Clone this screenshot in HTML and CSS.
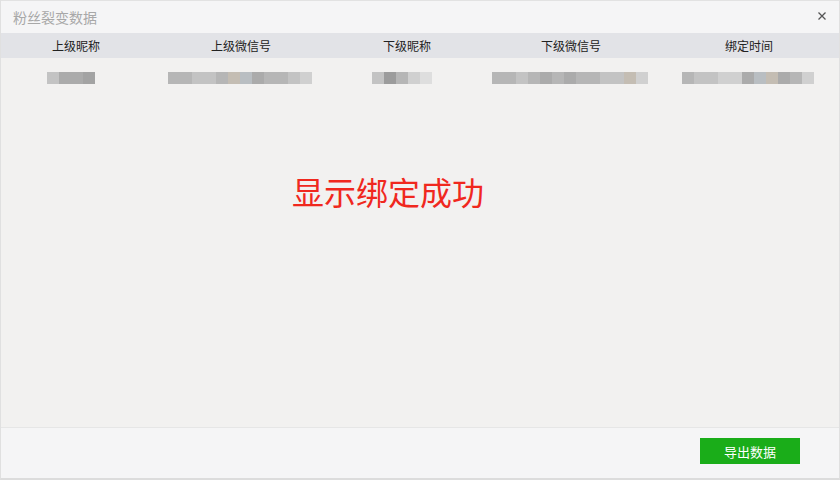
FILE: index.html
```html
<!DOCTYPE html>
<html lang="zh-CN">
<head>
  <meta charset="UTF-8">
  <title>粉丝裂变数据</title>
  <link rel="stylesheet" href="styles.css">
</head>
<body>

  <div class="window">
    <div class="title-bar">
      <span class="title">粉丝裂变数据</span>
      <svg class="close" width="8" height="8" viewBox="0 0 8 8">
        <path d="M0.5 0.5 L7.5 7.5 M7.5 0.5 L0.5 7.5" stroke="#555" stroke-width="1.3" fill="none"/>
      </svg>
    </div>

    <div class="table-head">
      <span>上级昵称</span>
      <span>上级微信号</span>
      <span>下级昵称</span>
      <span>下级微信号</span>
      <span>绑定时间</span>
    </div>

    <div class="content">
      <!-- ligne floutée (données masquées) -->
      <div class="table-row">
        <div class="cell">
          <div class="mosaic shift">
            <i class="s5"></i><i class="s3"></i><i class="s3"></i><i class="s2"></i>
          </div>
        </div>
        <div class="cell">
          <div class="mosaic">
            <i class="s4"></i><i class="s4"></i><i class="s5"></i><i class="s5"></i><i class="s4"></i><i class="tan"></i>
            <i class="blu"></i><i class="s3"></i><i class="s4"></i><i class="s4"></i><i class="s5"></i><i class="s6"></i>
          </div>
        </div>
        <div class="cell">
          <div class="mosaic shift">
            <i class="s5"></i><i class="s1"></i><i class="s4"></i><i class="s6"></i><i class="s7"></i>
          </div>
        </div>
        <div class="cell">
          <div class="mosaic">
            <i class="s4"></i><i class="s4"></i><i class="s5"></i><i class="s4"></i><i class="s3"></i><i class="s4"></i><i class="s3"></i>
            <i class="s4"></i><i class="s4"></i><i class="s5"></i><i class="s5"></i><i class="tan"></i><i class="s6"></i>
          </div>
        </div>
        <div class="cell">
          <div class="mosaic">
            <i class="s4"></i><i class="s5"></i><i class="s5"></i><i class="s6"></i><i class="s6"></i><i class="s3"></i>
            <i class="blu"></i><i class="tan"></i><i class="s3"></i><i class="s4"></i><i class="s6"></i>
          </div>
        </div>
      </div>

      <p class="notice">显示绑定成功</p>
    </div>

    <div class="footer">
      <button class="btn-export">导出数据</button>
    </div>
  </div>

</body>
</html>
```

FILE: styles.css
```css
/* Fenêtre "粉丝裂变数据" */
:root {
  --wx-green: #1aad19;
  --head-bg: #e2e3e7;
  --body-bg: #f2f1f0;
  --bar-bg: #f5f5f6;
  --text: #333333;
}
* {
  box-sizing: border-box;
  margin: 0;
  padding: 0;
}
body {
  font-family: "Noto Sans CJK SC", "Noto Sans", sans-serif;
  color: var(--text);
  background: var(--body-bg);
}
.window {
  width: 840px;
  height: 480px;
  display: flex;
  flex-direction: column;
  border-left: 1px solid #e0e0e0;
  border-right: 1px solid #e0e0e0;
  border-bottom: 2px solid #dcdcdc;
}
.title-bar {
  height: 33px;
  display: flex;
  align-items: center;
  justify-content: space-between;
  padding: 0 13px 0 12px;
  background: var(--bar-bg);
  border-top: 1px solid #e2e2e2;
}
.title {
  font-size: 14px;
  color: #a8a8a8;
}
.close {
  display: block;
  margin-top: -2px;
}
.table-head,
.table-row {
  display: grid;
  grid-template-columns: 150px 180px 152px 176px 1fr;
}
.table-head {
  height: 25px;
  align-items: center;
  background: var(--head-bg);
  font-size: 12px;
  color: #222;
  text-align: center;
}
.content {
  flex: 1;
  background: var(--body-bg);
}
.table-row {
  height: 26px;
  align-items: end;
}
.cell {
  display: flex;
  justify-content: center;
  padding-right: 2px;
}
.mosaic {
  display: flex;
  height: 12px;
}
.mosaic.shift {
  margin-right: 8px;
}
.mosaic i {
  display: block;
  width: 12px;
  height: 12px;
}
.s1 { background: #9c9c9c; }
.s2 { background: #a3a3a3; }
.s3 { background: #ababab; }
.s4 { background: #b6b6b6; }
.s5 { background: #c3c3c3; }
.s6 { background: #d0d0d0; }
.s7 { background: #dedede; }
.tan { background: #c4bdb3; }
.blu { background: #b9bec2; }
.notice {
  margin: 85px 0 0 291px;
  font-size: 32px;
  line-height: 44px;
  color: #f0281e;
}
.footer {
  height: 51px;
  display: flex;
  align-items: center;
  justify-content: flex-end;
  padding-right: 39px;
  background: var(--bar-bg);
  border-top: 1px solid #e6e6e6;
}
.btn-export {
  width: 100px;
  height: 26px;
  margin-top: -4px;
  border: none;
  background: var(--wx-green);
  color: #fff;
  font-family: inherit;
  font-size: 13px;
}
```
